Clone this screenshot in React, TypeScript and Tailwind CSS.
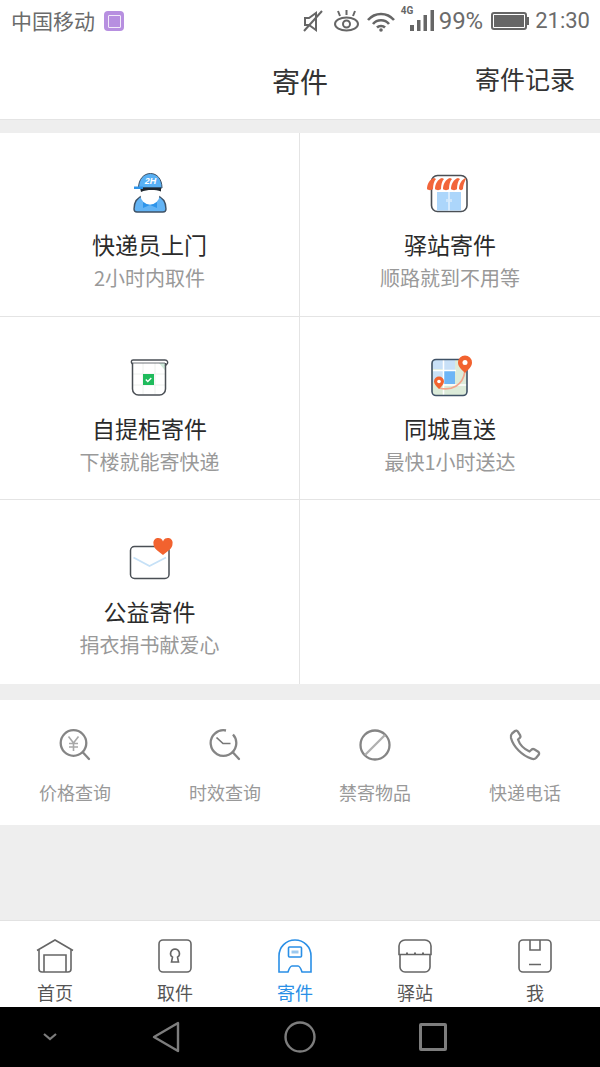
const cjk = "font-['Noto_Sans_CJK_SC',sans-serif]";

function CourierIcon() {
  return (
    <svg width="40" height="44" viewBox="0 0 40 44">
      <path d="M4 38c0-8 4-12 10-14h12c6 2 10 6 10 14 0 2-1 3-3 3H7c-2 0-3-1-3-3z" fill="#63b4f5" stroke="#3f5266" strokeWidth="1.400" />
      <path d="M13 31l7 3 7-3v6l-7-3-7 3z" fill="#2f95ea" />
      <ellipse cx="20" cy="24" rx="9.500" ry="9.500" fill="#fff" />
      <path d="M8.500 17C8.500 8 14 2.500 20.500 2.500S32 8 32 17z" fill="#58b0f4" stroke="#3f5266" strokeWidth="1" />
      <path d="M10 16.500h21v4c-6-2-14-2-20 .5z" fill="#1f272e" />
      <path d="M4 15.500h9v2.500H4z" fill="#2f95ea" />
      <text x="20.500" y="13" textAnchor="middle" fontSize="9" fontStyle="italic" fontWeight="700" fill="#fff" fontFamily="Liberation Sans">2H</text>
    </svg>
  );
}

function StationIcon() {
  return (
    <svg width="40" height="40" viewBox="0 0 40 40" className="overflow-visible">
      <rect x="1.500" y="2.500" width="35.500" height="36" rx="6" fill="#fff" stroke="#4a4f55" strokeWidth="1.600" />
      <rect x="7" y="19" width="24" height="18.500" fill="#acd6fb" />
      <path d="M19 19v18.500" stroke="#fff" strokeWidth="1" />
      <path d="M17 26v3M21 26v3" stroke="#fff" strokeWidth="0.800" />
      <path d="M-3 16c0-5 3-10 7-11l2 1c-2 2-3 6-3 10-1 1.500-5 1.500-6 0z" fill="#f2653a" />
      <path d="M5 16c0-5 3-10 7-11l2 1c-2 2-3 6-3 10-1 1.500-5 1.500-6 0z" fill="#f2653a" />
      <path d="M13 16c0-5 3-10 7-11l2 1c-2 2-3 6-3 10-1 1.500-5 1.500-6 0z" fill="#f2653a" />
      <path d="M21 16c0-5 3-10 7-11l2 1c-2 2-3 6-3 10-1 1.500-5 1.500-6 0z" fill="#f2653a" />
      <path d="M29 16c0-5 3-10 7-11l-1 3c-1 2-2 5-2 8-1 1.500-3 1.500-4 0z" fill="#f2653a" />
    </svg>
  );
}

function LockerIcon() {
  return (
    <svg width="40" height="40" viewBox="0 0 40 40">
      <path d="M2.500 6v26a6 6 0 0 0 6 6h21a6 6 0 0 0 6-6V6z" fill="#fff" />
      <path d="M29 6h6.500v8z" fill="#cfe9da" />
      <path d="M3 17h32M3 28h32M13 6v31M25 6v31" stroke="#eef1ee" strokeWidth="1" />
      <path d="M2.500 6v26a6 6 0 0 0 6 6h21a6 6 0 0 0 6-6V6" fill="none" stroke="#4a4f55" strokeWidth="1.500" />
      <path d="M2 6.500C1 5.500 1 3 3 3h32c2.500 0 3.500 2.500 2 4l-1.500 1.500" fill="none" stroke="#4a4f55" strokeWidth="1.400" strokeLinecap="round" />
      <path d="M2 6h33" stroke="#4a4f55" strokeWidth="0.800" />
      <rect x="13" y="17" width="11" height="11" fill="#1fbb5c" />
      <path d="M15.800 22.500l2 2 3.500-3.500" fill="none" stroke="#fff" strokeWidth="1.300" />
    </svg>
  );
}

function MapIcon() {
  return (
    <svg width="44" height="44" viewBox="0 0 44 44" className="overflow-visible">
      <rect x="4" y="4.500" width="35" height="36" rx="4" fill="#dcebd9" />
      <rect x="5" y="5" width="10" height="9" fill="#c8e0f7" />
      <rect x="16" y="5" width="11" height="10" fill="#c8e0f7" />
      <rect x="16" y="16" width="11" height="13" fill="#6db5f6" />
      <rect x="5" y="16" width="10" height="11" fill="#c8e0f7" />
      <path d="M15.500 5v35M5 15.500h23M15.500 30H39" stroke="#fff" strokeWidth="1.500" />
      <path d="M11 33c12 3 24-2 26-17" fill="none" stroke="#f2a48c" strokeWidth="1.800" />
      <rect x="4" y="4.500" width="35" height="36" rx="4" fill="none" stroke="#3f5266" strokeWidth="1.600" />
      <path d="M37 18c-4-4-7-6.500-7-10.500a7 7 0 0 1 14 0C44 11.500 41 14 37 18z" fill="#f2622f" />
      <circle cx="37" cy="7.500" r="2.500" fill="#fff" />
      <path d="M11 34c-3-3-5-5-5-7.500a5 5 0 0 1 10 0c0 2.500-2 4.500-5 7.500z" fill="#f2622f" />
      <circle cx="11" cy="26.500" r="1.800" fill="#fff" />
    </svg>
  );
}

function MailIcon() {
  return (
    <svg width="44" height="40" viewBox="0 0 44 40" className="overflow-visible">
      <rect x="2.500" y="6.500" width="38.500" height="32" rx="4" fill="#fff" stroke="#4a4f55" strokeWidth="1.500" />
      <path d="M5.500 17.500L21.500 26 38 17.500" fill="none" stroke="#c6e1f7" strokeWidth="1.800" />
      <path d="M35 15c-4-3.500-9.500-6-9.500-11a4.800 4.800 0 0 1 9.500-2.400A4.800 4.800 0 0 1 44.500 4c0 5-5.500 7.500-9.500 11z" fill="#f2622f" />
    </svg>
  );
}

function PriceIcon() {
  return (
    <svg width="34" height="34" viewBox="0 0 34 34" fill="none" stroke="#858585" strokeWidth="2.300">
      <circle cx="15.500" cy="15" r="12.800" />
      <path d="M25 24.500l6 6.500" strokeLinecap="round" />
      <path d="M10.500 8.500l5 6.500 5-6.500M15.500 15v8M11 15.500h9M11 19h9" stroke="#a8a8a8" strokeWidth="1.600" />
    </svg>
  );
}

function TimeIcon() {
  return (
    <svg width="34" height="34" viewBox="0 0 34 34" fill="none" stroke="#858585" strokeWidth="2.300">
      <path d="M18 2.500A12.800 12.800 0 1 0 25 6.500" />
      <path d="M25 24.500l6 6.500" strokeLinecap="round" />
      <path d="M8.500 9.500l6.500 6h7.500" stroke="#777" strokeWidth="1.700" />
    </svg>
  );
}

function BanIcon() {
  return (
    <svg width="32" height="32" viewBox="0 0 32 32" fill="none" stroke="#858585" strokeWidth="2.300">
      <circle cx="16" cy="16" r="14.500" />
      <path d="M6 26L26 6" stroke="#b0b0b0" />
    </svg>
  );
}

function PhoneIcon() {
  return (
    <svg width="32" height="32" viewBox="0 0 32 32" fill="none" stroke="#858585" strokeWidth="2.300" strokeLinejoin="round">
      <path d="M3 4.500l3-2.500c1-.8 2-.5 2.700.4l2.500 4c.5.9.3 1.800-.4 2.500L9 10.500c1.500 4.500 6 9.500 11.500 12l2.200-2c.8-.6 1.600-.7 2.500-.2l4 2.500c1 .7 1.200 2 .5 3L27 29c-1 1-3 1.200-4.500.7C13 26.500 4.500 18 2 9c-.4-1.800 0-3.500 1-4.500z" />
    </svg>
  );
}

const gray = "#666";

function HomeTab() {
  return (
    <svg width="38" height="34" viewBox="0 0 38 34" fill="none" stroke={gray} strokeWidth="1.600">
      <path d="M1 11.500L19 1l18 10.500" />
      <path d="M3 10.500V30a3 3 0 0 0 3 3h26a3 3 0 0 0 3-3V10.500" />
      <path d="M8 33V16h22v17" />
    </svg>
  );
}

function PickupTab() {
  return (
    <svg width="34" height="34" viewBox="0 0 34 34" fill="none" stroke={gray} strokeWidth="1.600">
      <rect x="1" y="1" width="32" height="32" rx="4" />
      <path d="M17 10a4.500 4.500 0 0 0-2.500 8.200L13.500 23h7l-1-4.800A4.500 4.500 0 0 0 17 10z" />
    </svg>
  );
}

function SendTab() {
  return (
    <svg width="34" height="34" viewBox="0 0 34 34" fill="none" stroke="#2a8fe6" strokeWidth="1.600">
      <path d="M1 33V17C1 8 8 1 17 1s16 7 16 16v16H24c-1-3-2-6-4-6h-6c-2 0-3 3-4 6z" />
      <rect x="10.500" y="8" width="13" height="10" rx="1" />
      <path d="M13.500 11.500h7v3h-7z" fill="#9cc9ef" stroke="none" />
    </svg>
  );
}

function StationTab() {
  return (
    <svg width="34" height="34" viewBox="0 0 34 34" fill="none" stroke={gray} strokeWidth="1.600">
      <path d="M1 15.500V7a6 6 0 0 1 6-6h20a6 6 0 0 1 6 6v8.500z" />
      <path d="M2 15.500V28a5 5 0 0 0 5 5h20a5 5 0 0 0 5-5V15.500" />
      <path d="M9 13.500v2M17 13.500v2M25 13.500v2" strokeWidth="2" />
    </svg>
  );
}

function MeTab() {
  return (
    <svg width="34" height="34" viewBox="0 0 34 34" fill="none" stroke={gray} strokeWidth="1.600">
      <rect x="1" y="1" width="32" height="32" rx="4" />
      <path d="M12 1v10h10V1M11 25.500h12" />
    </svg>
  );
}

function StatusIcons() {
  return (
    <>
      <svg width="20" height="22" viewBox="0 0 20 22" fill="none" stroke="#666" strokeWidth="2">
        <path d="M2 8h4l7-5v17l-7-5H2z" />
        <path d="M1 21L19 1" />
      </svg>
      <svg width="27" height="22" viewBox="0 0 27 22" fill="none" stroke="#666" strokeWidth="2" className="ml-[10px]">
        <ellipse cx="13.500" cy="14" rx="11.500" ry="6.500" />
        <circle cx="13.500" cy="14" r="3.500" />
        <path d="M7 6L5 1M13.500 5V0M20 6l2-5" />
      </svg>
      <svg width="30" height="22" viewBox="0 0 30 22" fill="none" stroke="#666" strokeWidth="2.600" className="ml-[6px]">
        <path d="M2 10c7-8 19-8 26 0M7 14c4-5 12-5 16 0M11 17.500c2-2 6-2 8 0" />
        <circle cx="15" cy="20" r="1.800" fill="#666" stroke="none" />
      </svg>
      <div className="relative w-[34px] h-[26px] ml-[5px]">
        <span className="absolute left-0 top-[-2px] text-[10px] leading-[10px] font-bold text-[#666] font-['Roboto',sans-serif]">4G</span>
        <svg width="24" height="21" viewBox="0 0 24 21" fill="#666" className="absolute left-[9px] top-[2px]">
          <rect x="0" y="15" width="4" height="6" />
          <rect x="7" y="10" width="3.500" height="11" />
          <rect x="13.500" y="5" width="3.500" height="16" />
          <rect x="20.500" y="0" width="3.500" height="21" />
        </svg>
      </div>
    </>
  );
}

type Service = { icon: React.ReactNode; title: string; sub: string };

const services: Service[] = [
  { icon: <CourierIcon />, title: "快递员上门", sub: "2小时内取件" },
  { icon: <StationIcon />, title: "驿站寄件", sub: "顺路就到不用等" },
  { icon: <LockerIcon />, title: "自提柜寄件", sub: "下楼就能寄快递" },
  { icon: <MapIcon />, title: "同城直送", sub: "最快1小时送达" },
  { icon: <MailIcon />, title: "公益寄件", sub: "捐衣捐书献爱心" },
];

const tools = [
  { icon: <PriceIcon />, label: "价格查询" },
  { icon: <TimeIcon />, label: "时效查询" },
  { icon: <BanIcon />, label: "禁寄物品" },
  { icon: <PhoneIcon />, label: "快递电话" },
];

const tabs = [
  { icon: <HomeTab />, label: "首页" },
  { icon: <PickupTab />, label: "取件" },
  { icon: <SendTab />, label: "寄件", active: true },
  { icon: <StationTab />, label: "驿站" },
  { icon: <MeTab />, label: "我" },
];

export default function App() {
  return (
    <div className={`w-[600px] h-[1067px] flex flex-col bg-[#eeeeee] overflow-hidden ${cjk}`}>
      {/* status bar */}
      <div className="h-[42px] bg-white flex items-center pl-[11px] pr-[10px] text-[#6b6b6b]">
        <span className="text-[21px] leading-none -mt-[2px]">中国移动</span>
        <div className="ml-[9px] w-[20px] h-[20px] rounded-[4px] bg-[#b78fe0] flex items-center justify-center">
          <div className="w-[13px] h-[13px] border border-white/80 rounded-[1px]" />
        </div>
        <div className="ml-auto flex items-center">
          <StatusIcons />
          <span className="ml-[4px] text-[24px] leading-none font-['Roboto',sans-serif]">99%</span>
          <div className="ml-[8px] w-[36px] h-[18px] border-2 border-[#666] rounded-[3px] p-[1px] relative">
            <div className="w-full h-full bg-[#666]" />
            <div className="absolute right-[-4px] top-[3px] w-[2px] h-[8px] bg-[#666]" />
          </div>
          <span className="ml-[8px] text-[22px] leading-none font-['Roboto',sans-serif]">21:30</span>
        </div>
      </div>

      {/* nav */}
      <div className="h-[78px] bg-white relative flex items-center justify-center border-b border-[#e4e4e4]">
        <span className="text-[28px] leading-none text-[#333]">寄件</span>
        <span className="absolute right-[25px] top-[24px] text-[25px] leading-none text-[#333]">寄件记录</span>
      </div>

      {/* services */}
      <div className="mt-[13px] bg-white grid grid-cols-2">
        {services.map((s, i) => (
          <div
            key={s.title}
            className={`h-[183.500px] flex flex-col items-center border-[#e4e4e4] ${i < 4 ? "border-b" : ""} ${i % 2 === 0 ? "border-r" : ""}`}
          >
            <div className="mt-[38px] h-[44px] flex items-center justify-center">{s.icon}</div>
            <div className="mt-[14px] text-[23px] leading-[30px] text-[#2b2b2b]">{s.title}</div>
            <div className="mt-[6px] text-[20px] leading-[26px] text-[#999]">{s.sub}</div>
          </div>
        ))}
        <div className="h-[183.500px]" />
      </div>

      {/* tools */}
      <div className="mt-[16px] h-[125px] bg-white grid grid-cols-4">
        {tools.map((t) => (
          <div key={t.label} className="flex flex-col items-center pt-[28px]">
            <div className="h-[34px] flex items-center justify-center">{t.icon}</div>
            <div className="mt-[18px] text-[18px] leading-[24px] text-[#999]">{t.label}</div>
          </div>
        ))}
      </div>

      <div className="flex-1" />

      {/* tab bar */}
      <div className="h-[87px] bg-white border-t border-[#e2e2e2] grid grid-cols-5 overflow-hidden">
        {tabs.map((t) => (
          <div key={t.label} className="flex flex-col items-center pt-[18px] pr-[10px]">
            <div className="h-[34px] flex items-center justify-center">{t.icon}</div>
            <div className={`mt-[7px] text-[18px] leading-[24px] ${t.active ? "text-[#2a8fe6]" : "text-[#555]"}`}>{t.label}</div>
          </div>
        ))}
      </div>

      {/* system nav */}
      <div className="h-[60px] bg-black flex items-center">
        <svg width="16" height="10" viewBox="0 0 16 10" fill="none" stroke="#7d7d7d" strokeWidth="2.200" className="ml-[42px]">
          <path d="M2 2l6 5 6-5" />
        </svg>
        <svg width="28" height="32" viewBox="0 0 28 32" fill="none" stroke="#7d7d7d" strokeWidth="2.400" strokeLinejoin="round" className="ml-[94px]">
          <path d="M2 16L26 2v28z" />
        </svg>
        <svg width="32" height="32" viewBox="0 0 32 32" fill="none" stroke="#7d7d7d" strokeWidth="2.400" className="ml-[104px]">
          <circle cx="16" cy="16" r="14.500" />
        </svg>
        <div className="ml-[103px] w-[28px] h-[28px] border-[3px] border-[#7d7d7d] rounded-[2px]" />
      </div>
    </div>
  );
}
